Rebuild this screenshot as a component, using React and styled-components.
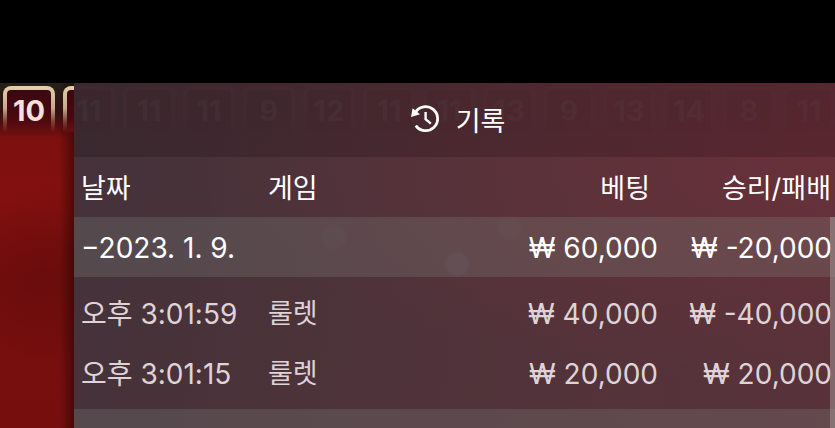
import React from "react";
import styled, { createGlobalStyle } from "styled-components";

const GlobalStyle = createGlobalStyle`
  *, *::before, *::after { box-sizing: border-box; }
  body {
    margin: 0;
    background: #000;
    font-family: Inter, "Noto Sans CJK KR", sans-serif;
  }
`;

const Screen = styled.div`
  display: grid;
  grid-template-rows: 83px minmax(0, 1fr);
  height: 100vh;
  overflow: hidden;
  background: #000;
`;

const TopBar = styled.header`
  background: #000;
`;

const Stage = styled.main`
  display: grid;
  grid-template-columns: 74px minmax(0, 1fr);
  min-height: 0;
`;

const GameFelt = styled.section`
  overflow: hidden;
  background:
    linear-gradient(90deg, transparent 80%, rgba(20, 0, 0, 0.45)),
    radial-gradient(ellipse 90px 90px at 60% 190px, rgba(85, 8, 8, 0.4), transparent),
    linear-gradient(180deg, #262019 0, #32100f 30px, #5c0d0f 44px, #7d100f 56px, #83100f 120px, #760f0e 200px, #760e0d 100%);
`;

const Strip = styled.ul`
  display: flex;
  gap: 8px;
  margin: 0;
  padding: 3px 0 0 3px;
  list-style: none;
`;

const Tile = styled.li`
  flex: none;
  width: 52px;
  height: 48px;
  padding: 4px 4px 0;
  border-radius: 8px 8px 0 0;
  color: #f3dfdd;
  background: linear-gradient(180deg, #e6d0ab, #c9a890 22px, rgba(170, 110, 90, 0.5) 36px, transparent 46px);
`;

const TileFace = styled.span`
  display: flex;
  align-items: center;
  justify-content: center;
  height: 44px;
  padding-bottom: 3px;
  border-radius: 4px 4px 0 0;
  background: linear-gradient(180deg, #3a0812, #48080f 28px, #640d10 40px, transparent);
  font-size: 29px;
  font-weight: 700;
`;

const Panel = styled.section`
  display: grid;
  grid-template-rows: 74px minmax(0, 1fr);
  min-width: 0;
  min-height: 0;
  color: #fff;
  background:
    radial-gradient(circle at 260px 154px, rgba(110, 110, 125, 0.06) 10px, transparent 14px),
    radial-gradient(circle at 383px 181px, rgba(110, 110, 130, 0.13) 10px, transparent 14px),
    radial-gradient(circle at 436px 145px, rgba(110, 110, 120, 0.06) 10px, transparent 14px),
    radial-gradient(ellipse 640px 220px at 100% 22%, rgba(125, 46, 56, 0.44), transparent),
    linear-gradient(98deg, #44323a, #50333a 50%, #59323a);
`;

const PanelHeader = styled.div`
  display: grid;
  overflow: hidden;
  background: linear-gradient(90deg, rgba(38, 22, 26, 0.34), rgba(55, 16, 26, 0.3));
  > * { grid-area: 1 / 1; }
`;

const GhostStrip = styled(Strip)`
  padding-left: 0;
  margin-left: -11px;
  opacity: 0.17;
  mask-image: linear-gradient(180deg, #000 36px, transparent 50px);
`;

const GhostTile = styled.li`
  display: flex;
  flex: none;
  align-items: center;
  justify-content: center;
  width: 52px;
  height: 48px;
  padding-bottom: 3px;
  border: 4px solid #52333a;
  border-bottom: 0;
  border-radius: 8px 8px 0 0;
  color: #54484c;
  background: rgba(60, 20, 28, 0.3);
  font-size: 29px;
  font-weight: 700;
`;

const Title = styled.h1`
  display: flex;
  align-items: center;
  justify-content: center;
  gap: 16px;
  margin: 0;
  padding-left: 7px;
  z-index: 1;
  font-size: 27px;
  line-height: 40px;
  font-weight: 400;
`;

const TitleText = styled.span`
  padding-top: 4px;
`;

const Body = styled.div`
  position: relative;
  min-height: 0;
  overflow: hidden;
`;

const HistoryTable = styled.table`
  width: 100%;
  table-layout: fixed;
  border-collapse: collapse;
  font-size: 28px;
  line-height: 40px;
`;

const Col = styled.col`
  width: ${(p) => p.$width};
`;

const HeadCell = styled.th`
  height: 60px;
  padding: 3px ${(p) => p.$inset || "0"} 0 7px;
  text-align: ${(p) => (p.$end ? "right" : "left")};
  font-size: 27px;
  font-weight: 400;
  white-space: nowrap;
`;

const GroupRow = styled.tr`
  background: rgba(146, 165, 155, 0.2);
`;

const Cell = styled.td`
  height: 60px;
  padding: 1px ${(p) => p.$inset || "0"} 0 7px;
  text-align: ${(p) => (p.$end ? "right" : "left")};
  white-space: nowrap;
`;

const GameCell = styled(Cell)`
  font-size: 27px;
`;

const RecordRow = styled.tr`
  color: #dfd3d7;
  &:nth-child(2) > td { height: 66px; padding-top: 7px; }
  &:last-child > td { height: 66px; padding-bottom: 6px; }
`;

const GroupToggle = styled.button`
  padding: 0;
  border: 0;
  background: none;
  color: inherit;
  font: inherit;
  cursor: pointer;
`;

const ScrollThumb = styled.div`
  position: absolute;
  top: 60px;
  right: 0;
  bottom: 0;
  width: 5px;
  background: rgba(160, 150, 150, 0.55);
`;

const Icon = styled.svg`
  display: block;
  margin-bottom: 3px;
`;

const HistoryIcon = () => (
  <Icon width="29" height="29" viewBox="0 0 29 29" fill="none" aria-hidden="true">
    <path d="M4.4 8.4A12 12 0 1 1 4.8 21.6" stroke="#fff" strokeWidth="2.8" />
    <path d="M1.6 4.2L0 12.9L9 10.3Z" fill="#fff" />
    <path d="M14.6 8V15.2L19.8 19.6" stroke="#fff" strokeWidth="2.4" />
  </Icon>
);

const ghosts = [11, 11, 11, 9, 12, 11, 11, 13, 9, 13, 14, 8, 11];

const records = [
  { time: "오후 3:01:59", game: "룰렛", bet: "₩ 40,000", result: "₩ -40,000" },
  { time: "오후 3:01:15", game: "룰렛", bet: "₩ 20,000", result: "₩ 20,000" },
];

export default function App() {
  return (
    <Screen>
      <GlobalStyle />
      <TopBar />
      <Stage>
        <GameFelt>
          <Strip>
            <Tile><TileFace>10</TileFace></Tile>
            <Tile><TileFace /></Tile>
          </Strip>
        </GameFelt>
        <Panel>
          <PanelHeader>
            <GhostStrip aria-hidden="true">
              {ghosts.map((n, i) => <GhostTile key={i}>{n}</GhostTile>)}
            </GhostStrip>
            <Title><HistoryIcon /><TitleText>기록</TitleText></Title>
          </PanelHeader>
          <Body>
            <HistoryTable>
              <colgroup>
                <Col $width="187px" />
                <Col />
                <Col $width="200px" />
                <Col $width="174px" />
              </colgroup>
              <thead>
                <tr>
                  <HeadCell scope="col">날짜</HeadCell>
                  <HeadCell scope="col">게임</HeadCell>
                  <HeadCell scope="col" $end $inset="11px">베팅</HeadCell>
                  <HeadCell scope="col" $end $inset="4px">승리/패배</HeadCell>
                </tr>
              </thead>
              <tbody>
                <GroupRow>
                  <Cell colSpan={2}>
                    <GroupToggle type="button" aria-expanded="true">−2023. 1. 9.</GroupToggle>
                  </Cell>
                  <Cell $end $inset="3px">₩ 60,000</Cell>
                  <Cell $end $inset="3px">₩ -20,000</Cell>
                </GroupRow>
                {records.map((r) => (
                  <RecordRow key={r.time}>
                    <Cell>{r.time}</Cell>
                    <GameCell>{r.game}</GameCell>
                    <Cell $end $inset="3px">{r.bet}</Cell>
                    <Cell $end $inset="3px">{r.result}</Cell>
                  </RecordRow>
                ))}
              </tbody>
              <tbody>
                <GroupRow><Cell colSpan={4} /></GroupRow>
              </tbody>
            </HistoryTable>
            <ScrollThumb />
          </Body>
        </Panel>
      </Stage>
    </Screen>
  );
}
